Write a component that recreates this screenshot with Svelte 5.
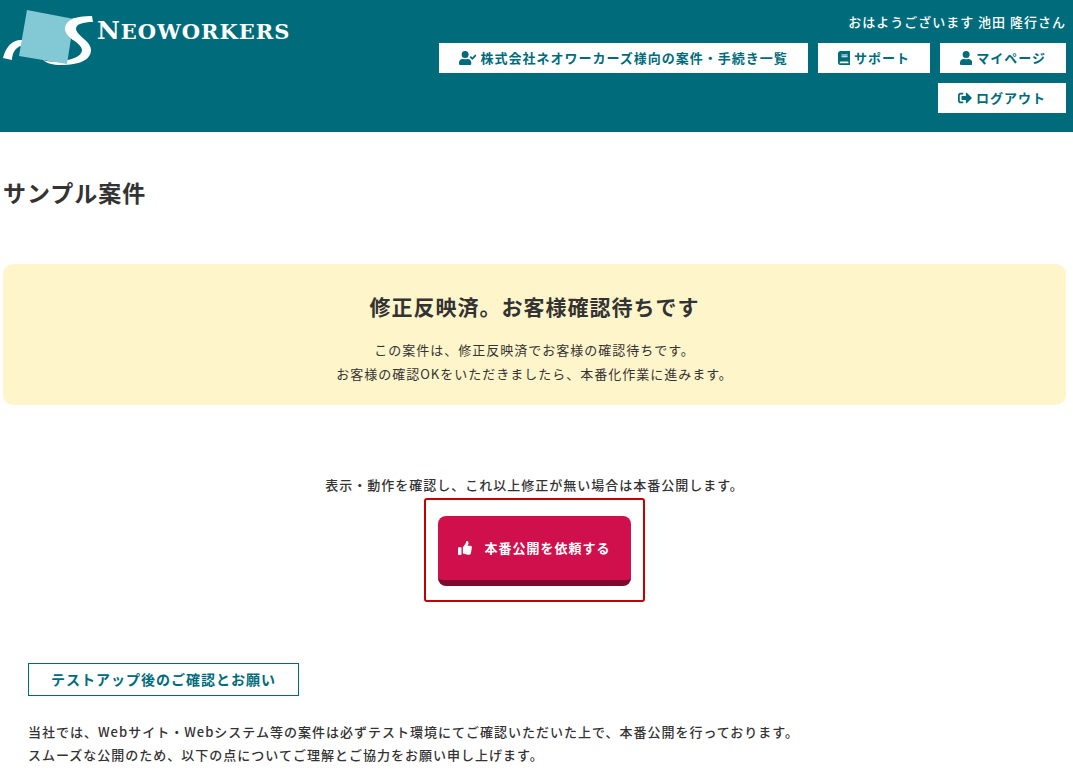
<script>
  const company = '株式会社ネオワーカーズ';
  const userName = '池田 隆行';

  // solid icons, drawn on their own view boxes
  const icons = {
    userCheck: {
      box: '0 0 640 512',
      path: 'M224 256A128 128 0 1 0 224 0a128 128 0 0 0 0 256zm90 32h-17a174 174 0 0 1-146 0h-17C60 288 0 348 0 422v42c0 26 22 48 48 48h352c26 0 48-22 48-48v-42c0-74-60-134-134-134zM636 160l-28-28c-5-5-12-5-17 0L487 236l-45-45c-5-5-12-5-17 0l-28 28c-5 5-5 12 0 17l82 83c5 5 12 5 17 0l140-142c5-5 5-12 0-17z'
    },
    book: {
      box: '0 0 448 512',
      path: 'M448 360V24c0-13-11-24-24-24H96C43 0 0 43 0 96v320c0 53 43 96 96 96h328c13 0 24-11 24-24v-16c0-8-4-14-9-19-4-15-4-59 0-74 5-4 9-11 9-19zM128 134c0-3 3-6 6-6h212c3 0 6 3 6 6v20c0 3-3 6-6 6H134c-3 0-6-3-6-6v-20zm0 64c0-3 3-6 6-6h212c3 0 6 3 6 6v20c0 3-3 6-6 6H134c-3 0-6-3-6-6v-20zm253 250H96a32 32 0 0 1 0-64h285c-2 17-2 47 0 64z'
    },
    user: {
      box: '0 0 448 512',
      path: 'M224 256A128 128 0 1 0 224 0a128 128 0 0 0 0 256zm90 32h-17a174 174 0 0 1-146 0h-17C60 288 0 348 0 422v42c0 26 22 48 48 48h352c26 0 48-22 48-48v-42c0-74-60-134-134-134z'
    },
    signOut: {
      box: '0 0 512 512',
      path: 'M497 273 329 441c-15 15-41 5-41-17v-96H152c-13 0-24-11-24-24v-96c0-13 11-24 24-24h136V88c0-21 26-32 41-17l168 168c9 9 9 25 0 34zM192 436v-40c0-7-5-12-12-12H96c-18 0-32-14-32-32V160c0-18 14-32 32-32h84c7 0 12-5 12-12V76c0-7-5-12-12-12H96C43 64 0 107 0 160v192c0 53 43 96 96 96h84c7 0 12-5 12-12z'
    },
    thumbsUp: {
      box: '0 0 512 512',
      path: 'M104 224H24c-13 0-24 11-24 24v240c0 13 11 24 24 24h80c13 0 24-11 24-24V248c0-13-11-24-24-24zM384 81c0 43-26 66-33 95h102c33 0 59 28 59 58 0 18-8 37-19 49 9 22 8 54-9 76 8 24 0 54-16 70 4 17 2 31-6 42-19 28-67 28-107 28h-3c-46 0-83-17-113-30-15-6-35-15-50-15-6 0-11-5-11-12V228c0-3 1-6 4-8 37-37 53-76 84-107 14-14 19-35 24-56 4-17 13-57 32-57 24 0 62 8 62 81z'
    }
  };

  const navItems = [
    { label: `${company}様向の案件・手続き一覧`, icon: 'userCheck' },
    { label: 'サポート', icon: 'book' },
    { label: 'マイページ', icon: 'user' },
    { label: 'ログアウト', icon: 'signOut' }
  ];
</script>

{#snippet icon(name)}
  <svg class="icon" viewBox={icons[name].box} aria-hidden="true">
    <path d={icons[name].path} />
  </svg>
{/snippet}

<header class="header">
  <a class="logo" href="/">
    <svg class="logo-mark" viewBox="0 0 90 56" aria-hidden="true">
      <path class="ribbon" d="M0 48C3 36 10 29 20 30L18 36C13 37 9 43 9 50Z" />
      <path class="ribbon" d="M40 50C52 54 79 50 79 40C79 33 62 28 62 18C62 10 72 6 89 6L90 12C80 12 73 14 73 19C73 25 88 31 88 40C88 50 76 55 58 55C50 55 43 53 40 50Z" />
      <path class="sheet" d="M24 0L71 9L64 54L16 46Z" />
      <path class="ribbon" d="M71 8C65 11 62 14 62 19C62 23 66 27 70 30L75 24C71 18 73 15 77 13Z" />
    </svg>
    <span class="logo-text">N<span class="logo-caps">EOWORKERS</span></span>
  </a>
  <div class="header-side">
    <p class="greeting">おはようございます {userName}さん</p>
    <nav class="nav">
      {#each navItems as item}
        <a class="nav-link" href="/">{@render icon(item.icon)}{item.label}</a>
      {/each}
    </nav>
  </div>
</header>

<main class="main">
  <h1 class="title">サンプル案件</h1>

  <section class="status">
    <h2 class="status-title">修正反映済。お客様確認待ちです</h2>
    <p>この案件は、修正反映済でお客様の確認待ちです。</p>
    <p>お客様の確認OKをいただきましたら、本番化作業に進みます。</p>
  </section>

  <section class="publish">
    <p>表示・動作を確認し、これ以上修正が無い場合は本番公開します。</p>
    <div class="publish-frame">
      <button class="publish-btn" type="button">{@render icon('thumbsUp')}本番公開を依頼する</button>
    </div>
  </section>

  <section class="notes">
    <h3 class="notes-title">テストアップ後のご確認とお願い</h3>
    <p>当社では、Webサイト・Webシステム等の案件は必ずテスト環境にてご確認いただいた上で、本番公開を行っております。</p>
    <p>スムーズな公開のため、以下の点についてご理解とご協力をお願い申し上げます。</p>
  </section>
</main>

<style>
  :global(body) {
    background: #fff;
    color: #333;
    font-family: 'Noto Sans CJK JP', sans-serif;
    font-size: 13px;
    font-weight: 500;
    letter-spacing: 1px;
    line-height: 23px;
  }

  h1,
  h2,
  h3,
  p {
    margin: 0;
  }

  a {
    text-decoration: none;
  }

  .icon {
    height: 14px;
    fill: currentColor;
    flex: none;
  }

  .header {
    display: flex;
    align-items: flex-start;
    padding: 10px 7px 19px 3px;
    background: #006c7b;
  }

  .logo {
    display: flex;
    flex: 0 0 30%;
    gap: 4px;
    color: #fff;
  }

  .logo-mark {
    width: 90px;
    height: 56px;
    flex: none;
  }

  .ribbon {
    fill: #fff;
  }

  .sheet {
    fill: #83c8d5;
  }

  .logo-text {
    padding-top: 7px;
    font-family: 'DejaVu Serif', serif;
    font-size: 25px;
    font-weight: 700;
    line-height: 28px;
  }

  .logo-caps {
    font-size: 21px;
  }

  .header-side {
    flex: 1;
    min-width: 0;
  }

  .greeting {
    margin-bottom: 10px;
    color: #fff;
    text-align: right;
  }

  .nav {
    display: flex;
    flex-wrap: wrap;
    justify-content: flex-end;
    gap: 10px;
  }

  .nav-link {
    display: flex;
    align-items: center;
    gap: 4px;
    padding: 3px 20px 4px;
    background: #fff;
    color: #006c7b;
    font-weight: 700;
  }

  .main {
    padding: 43px 7px 0 3px;
  }

  .title {
    font-size: 23px;
    line-height: 34px;
  }

  .status {
    margin-top: 55px;
    padding: 25px 20px 19px;
    border-radius: 10px;
    background: #fff5ca;
    font-weight: 400;
    line-height: 24px;
    text-align: center;
  }

  .status-title {
    margin-bottom: 15px;
    font-size: 21px;
    line-height: 34px;
  }

  .publish {
    display: flex;
    flex-direction: column;
    align-items: center;
    margin-top: 68px;
  }

  .publish-frame {
    margin-top: 2px;
    padding: 16px 12px 14px;
    border: 2px solid #c40000;
    border-radius: 3px;
  }

  .publish-btn {
    display: flex;
    align-items: center;
    gap: 12px;
    padding: 20px 20px 21px;
    border: 0;
    border-bottom: 6px solid #800a2e;
    border-radius: 8px;
    background: #d0104c;
    color: #fff;
    font: inherit;
    font-weight: 700;
    letter-spacing: inherit;
    cursor: pointer;
  }

  .notes {
    margin-top: 61px;
    padding: 0 25px;
  }

  .notes-title {
    width: fit-content;
    margin-bottom: 24px;
    padding: 4px 22px;
    border: 1px solid #006c7b;
    color: #006c7b;
    font-size: 14px;
  }
</style>
